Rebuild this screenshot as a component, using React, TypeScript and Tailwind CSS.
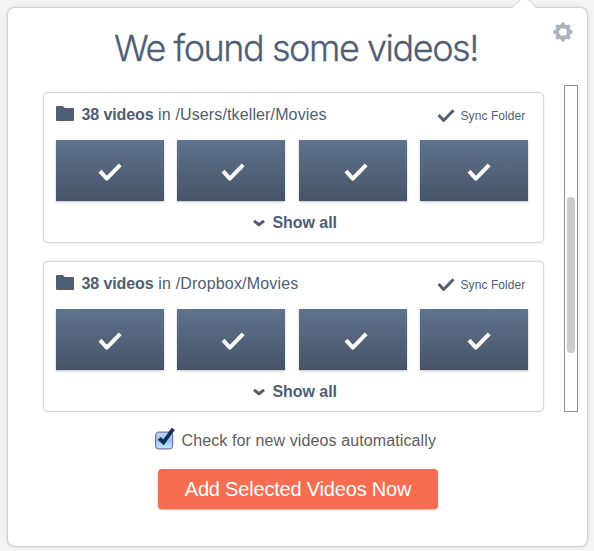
import React from "react";

function Check({ className }: { className: string }) {
  return (
    <svg viewBox="0 0 24 19" className={className} fill="none" stroke="currentColor" strokeLinejoin="round">
      <path d="M2 8.2 L8.8 15.6 L22.2 1.8" strokeWidth="4" />
    </svg>
  );
}

function Folder() {
  return (
    <svg viewBox="0 0 18 15" className="h-[15px] w-[18px] text-[#4d5e75]" fill="currentColor">
      <path d="M0 1Q0 0 1 0H6.2Q7 0 7.7 1T9.5 2H17Q18 2 18 3V14Q18 15 17 15H1Q0 15 0 14Z" />
    </svg>
  );
}

function Gear() {
  const teeth = [0, 45, 90, 135, 180, 225, 270, 315];
  return (
    <svg viewBox="-10 -10 20 20" className="h-5 w-5">
      <circle r="5.8" fill="none" stroke="#abb3c0" strokeWidth="3.9" />
      {teeth.map((angle) => (
        <path key={angle} d="M-2.2 -7 L-1.4 -9.3 Q0 -10.5 1.4 -9.3 L2.2 -7Z" fill="#abb3c0" transform={`rotate(${angle})`} />
      ))}
    </svg>
  );
}

const tileInsets = ["pl-0", "pl-[4px]", "pl-[6px]", "pl-[10px]"];

function FolderCard({ path, tracking }: { path: string; tracking: string }) {
  return (
    <section className="h-[151px] w-[501px] rounded-[5px] border border-[#d6d6d6] bg-white pt-[11px] pr-[15px] pl-3 shadow-[0_0_2px_rgba(0,0,0,0.12)]">
      <header className="flex h-[36px] items-start">
        <div className="mt-[2px]"><Folder /></div>
        <h2 className="mt-px ml-[7.5px] h-5 text-[16px] leading-5 whitespace-nowrap">
          <b className="tracking-[-0.1px]">38 videos</b>
          <span className={tracking}> in {path}</span>
        </h2>
        <label className="mt-[4px] ml-auto flex h-4 w-[91px] items-center">
          <Check className="h-[14px] w-[18px]" />
          <span className="ml-[5.5px] text-[12px] leading-4 tracking-[0.08px] whitespace-nowrap">Sync Folder</span>
        </label>
      </header>
      <div className="flex w-[472px] justify-between">
        {tileInsets.map((inset) => (
          <div key={inset} className={`flex h-[61px] w-[108px] items-center justify-center bg-linear-to-b from-[#5f738d] to-[#465468] pt-[3px] text-white shadow-[0_1px_2px_rgba(0,0,0,0.25)] ${inset}`}>
            <Check className="h-[19px] w-6" />
          </div>
        ))}
      </div>
      <button className="mt-[12px] ml-[197px] flex h-5 items-center text-[16px] leading-5 font-bold">
        <svg viewBox="0 0 12 8" className="h-2 w-3" fill="none" stroke="currentColor" strokeWidth="3">
          <path d="M1 1.9 L6 5.7 L11 1.9" strokeLinejoin="round" />
        </svg>
        <span className="ml-[7.5px] tracking-[-0.05px] whitespace-nowrap">Show all</span>
      </button>
    </section>
  );
}

export default function App() {
  return (
    <div className="h-[551px] w-[594px] overflow-hidden bg-[#f4f4f4] pt-2 pl-2 font-['Liberation_Sans',sans-serif] text-[#4d5e75]">
      <main className="relative h-[538px] w-[579px] rounded-[7px] bg-white shadow-[0_0_0_1px_#d2d2d2,0_0_4px_rgba(0,0,0,0.2)]">
        <svg viewBox="0 0 28 9" className="absolute top-[-8px] left-[502px] h-[9px] w-7">
          <path d="M1 9 L11.5 -1 H17.5 L27 9Z" fill="white" />
          <path d="M1 8 L11.5 -1 M17.5 -1 L27 8" fill="none" stroke="#d2d2d2" />
        </svg>
        <button className="absolute top-[14px] left-[545px]"><Gear /></button>
        <h1 className="flex h-[77px] items-start pt-[18px] pl-[106px] font-['Inter',sans-serif] text-[36px] leading-[44px] font-light tracking-[-1.45px] whitespace-nowrap [-webkit-text-stroke:0.3px_#4d5e75]">We found some videos!</h1>
        <div className="flex h-[327px] pl-[35px]">
          <div className="flex w-[501px] flex-col gap-[18px] pt-[7px]">
            <FolderCard path="/Users/tkeller/Movies" tracking="tracking-[0.13px]" />
            <FolderCard path="/Dropbox/Movies" tracking="tracking-[0.19px]" />
          </div>
          <div className="ml-5 h-[327px] w-[14px] border border-[#929292] pt-[111px] pl-[2px]">
            <div className="h-[156px] w-2 rounded-full bg-[#cacaca]" />
          </div>
        </div>
        <label className="mt-[12px] ml-[147px] flex h-[30px] items-center text-[16px] text-[#5d5d5d]">
          <svg viewBox="0 0 21 23" className="h-[23px] w-[21px]">
            <defs>
              <linearGradient id="box" x2="0" y2="1">
                <stop stopColor="#c2dbf4" />
                <stop offset=".5" stopColor="#98c3ee" />
                <stop offset="1" stopColor="#c8eaff" />
              </linearGradient>
            </defs>
            <rect x=".6" y="4.1" width="17" height="16.8" rx="3.5" fill="url(#box)" stroke="#7476b3" strokeWidth="1.2" />
            <path d="M4.2 10.3 L8.5 14.4 L18.3 .8" fill="none" stroke="#132f5c" strokeWidth="3.8" />
          </svg>
          <span className="mt-1 ml-[5.5px] leading-5 tracking-[0.11px] whitespace-nowrap">Check for new videos automatically</span>
        </label>
        <button className="mt-[15px] ml-[150px] flex h-10 w-[280px] items-center justify-center rounded-[4px] bg-[#f66d52] text-[20px] text-white shadow-[0_1px_2px_rgba(0,0,0,0.25)]">
          <span className="tracking-[-0.19px] whitespace-nowrap">Add Selected Videos Now</span>
        </button>
      </main>
    </div>
  );
}
